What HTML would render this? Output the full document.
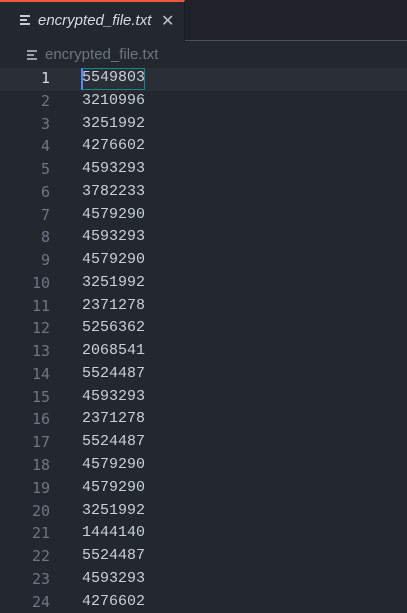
<!DOCTYPE html><html><head><style>
body{margin:0;width:407px;height:604px;background:#23272e;overflow:hidden;font-family:"Liberation Sans",sans-serif;position:relative}
.bar{position:absolute;left:0;top:0;width:407px;height:41px;background:#1f2228;border-bottom:1px solid #4b4e56;box-sizing:border-box}
.tab{position:absolute;left:0;top:0;width:185px;height:42px;background:#23272e;border-top:2px solid #f0583a;border-right:1px solid #1a1c21;box-sizing:border-box}
.ti{position:absolute;left:38px;top:10px;font-style:italic;font-size:15px;color:#d7dae0}
.x{position:absolute;left:161px;top:9px;font-size:16px;color:#b8c0cc}
.ic{position:absolute}
.ic i{display:block;height:2px;background:currentColor;margin-bottom:2px}
.bc{position:absolute;left:45px;top:46px;font-size:15px;color:#6c7682}
.hl{position:absolute;left:0;top:68px;width:407px;height:23px;background:#2a2e36}
.cur{position:absolute;left:81px;top:68px;width:64px;height:22px;border:1px solid #17858a;border-left:2px solid #528bff;box-sizing:border-box}
.ln{position:absolute;left:0;top:67px;width:50px;text-align:right;font:15px/22.77px "DejaVu Sans Mono",monospace;color:#6e7784}
.ln b{color:#d7dae0;font-weight:normal}
.code{position:absolute;left:82px;top:67px;font:15px/22.77px "Liberation Mono",monospace;color:#c8d1db}
</style></head><body>
<div class="bar"></div>
<div class="tab"><div class="ic" style="left:20px;top:13px;color:#c8ccd2;width:10px"><i></i><i style="width:7px"></i><i></i></div><div class="ti">encrypted_file.txt</div><div class="x">✕</div></div>
<div class="ic" style="left:27px;top:50px;color:#9aa0a8;width:10px"><i></i><i style="width:7px"></i><i></i></div>
<div class="bc">encrypted_file.txt</div>
<div class="hl"></div>
<div class="ln"><b>1</b><br>2<br>3<br>4<br>5<br>6<br>7<br>8<br>9<br>10<br>11<br>12<br>13<br>14<br>15<br>16<br>17<br>18<br>19<br>20<br>21<br>22<br>23<br>24</div>
<div class="code">5549803<br>3210996<br>3251992<br>4276602<br>4593293<br>3782233<br>4579290<br>4593293<br>4579290<br>3251992<br>2371278<br>5256362<br>2068541<br>5524487<br>4593293<br>2371278<br>5524487<br>4579290<br>4579290<br>3251992<br>1444140<br>5524487<br>4593293<br>4276602</div>
<div class="cur"></div>
</body></html>
